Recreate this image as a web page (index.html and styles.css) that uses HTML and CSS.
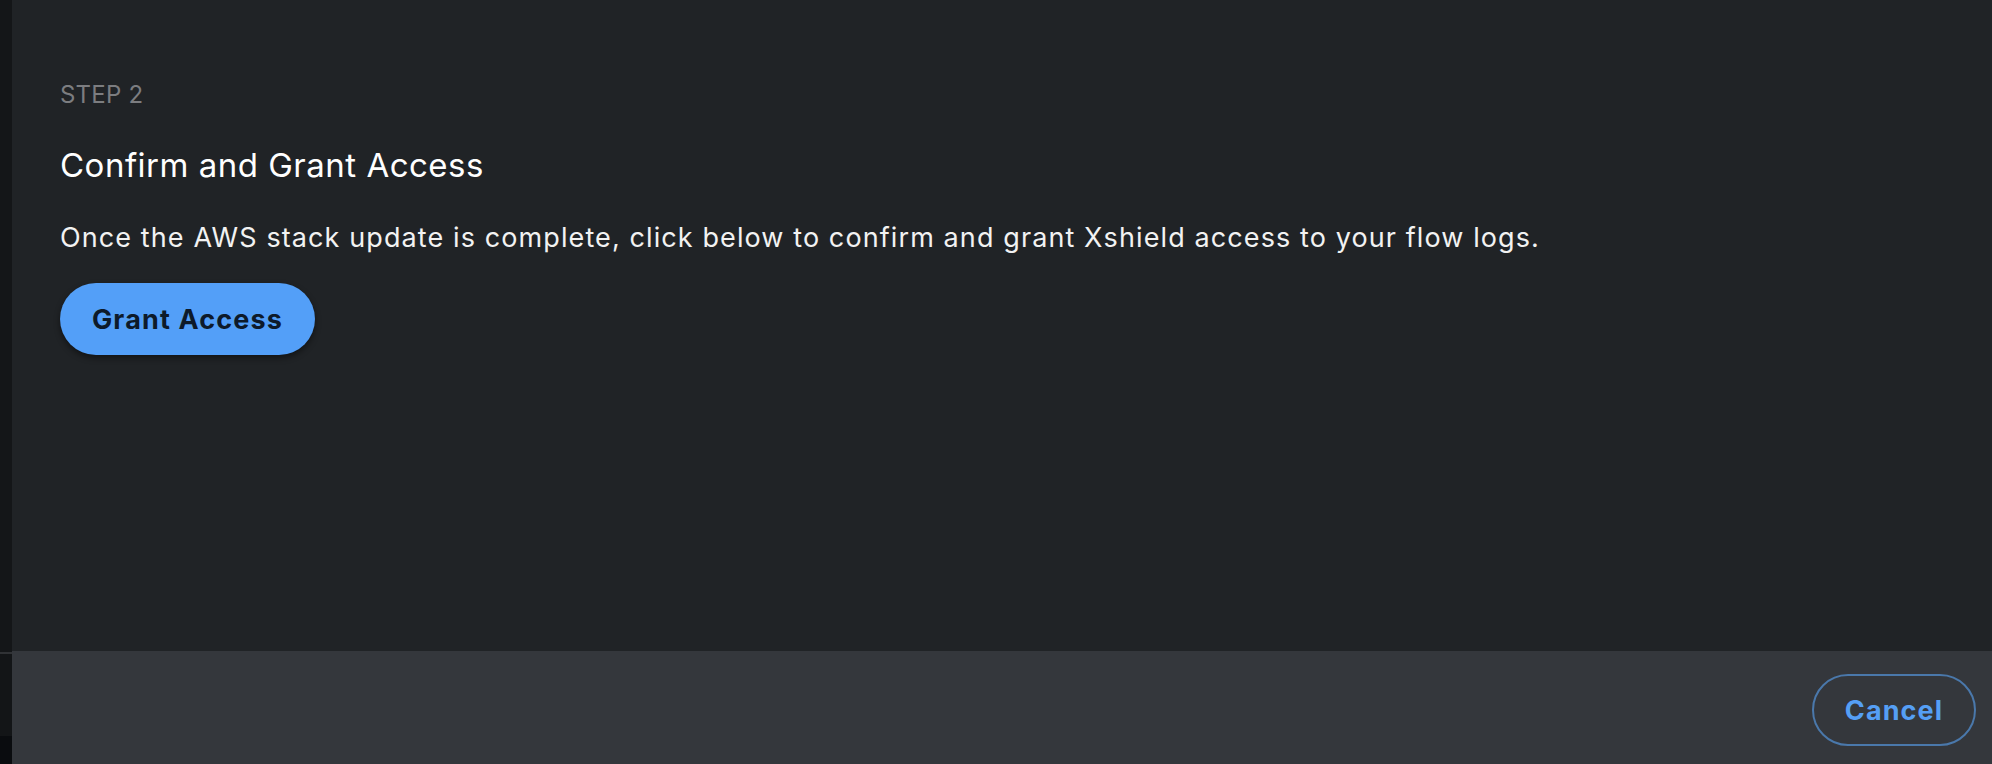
FILE: index.html
```html
<!DOCTYPE html>
<html lang="en">
<head>
<meta charset="utf-8">
<title>Confirm and Grant Access</title>
<link rel="stylesheet" href="styles.css">
</head>
<body>
<div class="app">
  <aside class="rail">
    <div class="rail-top"></div>
    <div class="rail-line"></div>
    <div class="rail-mid"></div>
    <div class="rail-bottom"></div>
  </aside>
  <main class="dialog">
    <section class="content">
      <div class="step">STEP 2</div>
      <h2 class="title">Confirm and Grant Access</h2>
      <p class="desc">Once the AWS stack update is complete, click below to confirm and grant Xshield access to your flow logs.</p>
      <button class="btn-primary" type="button">Grant Access</button>
    </section>
    <footer class="actions">
      <button class="btn-outline" type="button">Cancel</button>
    </footer>
  </main>
</div>
</body>
</html>
```

FILE: styles.css
```css
* { box-sizing: border-box; }
html, body { margin: 0; padding: 0; }
body {
  width: 1992px;
  height: 764px;
  overflow: hidden;
  background: #202326;
  font-family: Inter, "Open Sans", sans-serif;
  color: #ffffff;
}
.app {
  display: flex;
  height: 764px;
}
.rail {
  width: 12px;
  flex: 0 0 12px;
  display: flex;
  flex-direction: column;
}
.rail-top { height: 652px; background: #141618; }
.rail-line { height: 2px; background: #303235; }
.rail-mid { height: 82px; background: #131517; }
.rail-bottom { flex: 1; background: #0a0c0f; }

.dialog {
  flex: 1;
  display: flex;
  flex-direction: column;
}
.content {
  flex: 1;
  background: #202326;
  padding: 77px 48px 0 48px;
}
.step {
  font-size: 24px;
  line-height: 36px;
  color: #7c7d80;
  letter-spacing: 0.2px;
}
.title {
  margin: 30px 0 0 0;
  font-size: 33px;
  line-height: 44px;
  font-weight: 400;
  letter-spacing: 0.5px;
  color: #ffffff;
}
.desc {
  margin: 32px 0 0 0;
  font-size: 27px;
  line-height: 38px;
  font-weight: 400;
  letter-spacing: 1.1px;
  color: #f2f2f2;
}
.btn-primary {
  margin-top: 26px;
  width: 255px;
  height: 72px;
  border: none;
  border-radius: 36px;
  background: #539ff8;
  color: #0d1a2a;
  font-family: inherit;
  font-size: 27px;
  font-weight: 700;
  letter-spacing: 1.15px;
  box-shadow: 0 3px 6px rgba(0, 0, 0, 0.45);
  padding: 0;
}
.actions {
  height: 113px;
  background: #34373c;
  display: flex;
  justify-content: flex-end;
  align-items: flex-start;
  padding: 23px 16px 0 0;
}
.btn-outline {
  width: 164px;
  height: 72px;
  border: 2px solid #4a78ab;
  border-radius: 36px;
  background: transparent;
  color: #559ff5;
  font-family: inherit;
  font-size: 27px;
  font-weight: 700;
  letter-spacing: 1.1px;
  padding: 0;
}
```
